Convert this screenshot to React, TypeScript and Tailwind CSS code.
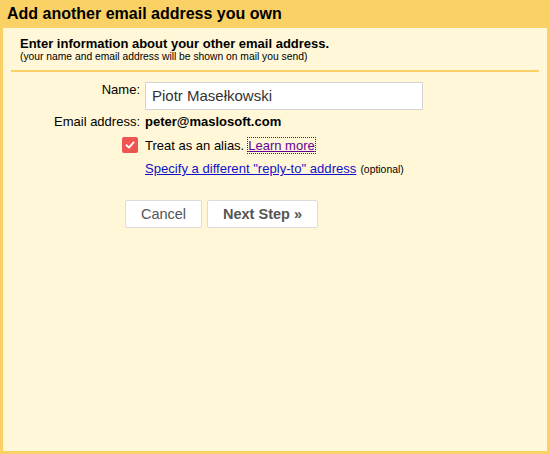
import React from "react";

export default function App() {
  return (
    <div
      className="w-[550px] h-[454px] bg-[#fad165] flex flex-col px-[3px] pb-[3px] text-black"
      style={{ fontFamily: '"Liberation Sans", Arial, sans-serif' }}
    >
      <div className="h-[28px] flex items-center pl-[4px] text-[16px] leading-[18px] font-bold">
        Add another email address you own
      </div>
      <div className="flex-1 bg-[#fff7d7] flex flex-col">
        <div className="mx-[8px] pt-[8px] border-b-2 border-[#fad165] pb-[7px] pl-[9px]">
          <div className="text-[13px] leading-[15px] font-bold">
            Enter information about your other email address.
          </div>
          <div className="text-[10.3px] leading-[12px]">
            (your name and email address will be shown on mail you send)
          </div>
        </div>

        <div className="flex flex-col mt-[10px]">
          <div className="flex items-start">
            <div className="w-[137px] text-right text-[13px] leading-[15px]">Name:</div>
            <div className="ml-[5px] w-[278px] h-[28px] bg-white border border-[#d5d5d5] flex items-center px-[6px] text-[15px] text-[#333]">
              Piotr Masełkowski
            </div>
          </div>
          <div className="flex items-start mt-[4px]">
            <div className="w-[137px] text-right text-[13px] leading-[15px]">Email address:</div>
            <div className="ml-[5px] text-[13px] leading-[15px] font-bold">peter@maslosoft.com</div>
          </div>
          <div className="flex items-center mt-[8px]">
            <div className="w-[137px] flex justify-end pr-[2px]">
              <div className="w-[16px] h-[16px] rounded-[2px] bg-[#ee5552] flex items-center justify-center">
                <svg width="12" height="12" viewBox="0 0 12 12" fill="none">
                  <path d="M2.5 6.2 L5 8.6 L9.6 3.4" stroke="white" strokeWidth="1.9" strokeLinecap="round" strokeLinejoin="round" />
                </svg>
              </div>
            </div>
            <div className="ml-[5px] text-[13px] leading-[15px] flex items-center">
              <span>Treat as an alias.</span>
              <span className="ml-[4px] outline outline-1 outline-dotted outline-[#333] text-[#660099] underline">
                Learn more
              </span>
            </div>
          </div>
          <div className="flex items-baseline mt-[8px] pl-[142px]">
            <span className="text-[13.1px] leading-[15px] text-[#1111cc] underline">
              Specify a different "reply-to" address
            </span>
            <span className="ml-[4px] text-[10.4px] leading-[12px]">(optional)</span>
          </div>
          <div className="flex mt-[24px] pl-[122px] gap-[5px]">
            <div className="w-[77px] h-[28px] bg-white border border-[#dcdcdc] rounded-[2px] flex items-center justify-center pt-[1px] text-[14.5px] text-[#555]">
              Cancel
            </div>
            <div className="w-[111px] h-[28px] bg-white border border-[#dcdcdc] rounded-[2px] flex items-center justify-center pt-[1px] text-[14.5px] font-bold text-[#555]">
              Next Step »
            </div>
          </div>
        </div>
      </div>
    </div>
  );
}
